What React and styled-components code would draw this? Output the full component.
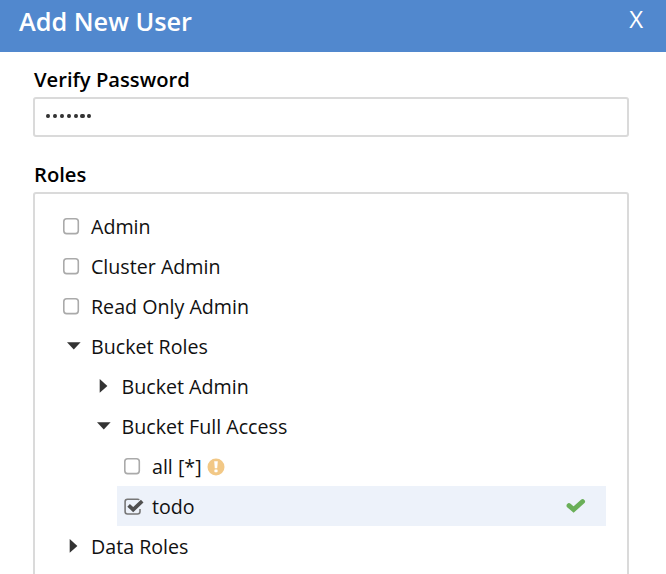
import React from "react";
import styled, { createGlobalStyle } from "styled-components";

const GlobalStyle = createGlobalStyle`
  * { box-sizing: border-box; }
  body {
    margin: 0;
    background: #fff;
    color: #111;
    font-family: "Open Sans", "Noto Sans", sans-serif;
    overflow: hidden;
  }
`;

const Dialog = styled.main`
  display: flex;
  flex-direction: column;
  height: 574px;
  overflow: hidden;
`;

const Header = styled.header`
  display: flex;
  flex: none;
  align-items: flex-start;
  justify-content: space-between;
  height: 52px;
  padding: 0 23px 0 19px;
  background: #5188ce;
  color: #fff;
`;

const Title = styled.h1`
  margin: 0;
  font-size: 25.3px;
  line-height: 42px;
  font-weight: 600;
`;

const CloseButton = styled.button`
  padding: 0;
  border: 0;
  background: none;
  color: #fff;
  font: 400 24px/38px "Open Sans", sans-serif;
`;

const Form = styled.form`
  display: flex;
  flex-direction: column;
  flex: none;
  padding: 13px 37px 0 33px;
`;

const Label = styled.label`
  height: 32px;
  padding-left: 1px;
  color: #000;
  font-size: 20.2px;
  line-height: 28px;
  font-weight: 600;
`;

const PasswordBox = styled.div`
  display: flex;
  align-items: center;
  gap: 2.7px;
  height: 40px;
  margin-bottom: 23px;
  padding: 0 0 2px 11px;
  border: 2px solid #dadada;
  border-radius: 3px;
`;

const Dot = styled.span`
  width: 4.2px;
  height: 4.8px;
  border-radius: 50%;
  background: #333;
`;

const RoleTree = styled.div`
  height: 420px;
  padding: 11.4px 21px 0 27px;
  border: 2px solid #dadada;
  border-radius: 3px;
`;

const Row = styled.div`
  display: flex;
  align-items: center;
  height: ${(p) => (p.$leaf ? 40.4 : 39.8)}px;
  margin-left: ${(p) => p.$level * 30.5 - 6}px;
  padding-left: 5.5px;
  background: ${(p) => (p.$selected ? "#edf2fa" : "transparent")};
`;

const IconSlot = styled.span`
  display: flex;
  width: 29.5px;
  flex: none;
`;

const RowText = styled.span`
  padding-top: 2px;
  font-size: 19.65px;
  line-height: 30px;
  white-space: pre;
`;

const Glyph = styled.svg`
  display: block;
  flex: none;
  overflow: visible;
`;

const WarningIcon = styled(Glyph)`
  margin: 2px 0 0 5px;
`;

const GreenCheck = styled(Glyph)`
  margin: 0 20px 0 auto;
`;

function RoleIcon({ type }) {
  if (type === "open" || type === "closed") {
    return (
      <Glyph width="22" height="18">
        <path
          fill="#333"
          d={type === "open" ? "M5 5.2H18.6L11.8 12.5Z" : "M7.7 2V15.8L15.4 8.9Z"}
        />
      </Glyph>
    );
  }
  return (
    <Glyph width="22" height="18">
      {type === "checked" ? (
        <>
          <path
            fill="none"
            stroke="#777"
            strokeWidth="1.6"
            d="M17 12V14.5Q17 17 14.5 17H4.5Q2.1 17 2.1 14.5V4.5Q2.1 2.2 4.5 2.2H14.5Q15.8 2.2 16.3 2.8"
          />
          <path fill="none" stroke="#505050" strokeWidth="3.7" d="M5.6 8.3L10.2 12.7L19.2 4.1" />
        </>
      ) : (
        <rect x="1.8" y="1.8" width="14.5" height="14.8" rx="2.8" fill="#fff" stroke="#aaa" strokeWidth="1.6" />
      )}
    </Glyph>
  );
}

const roles = [
  { name: "Admin", level: 0, type: "empty" },
  { name: "Cluster Admin", level: 0, type: "empty" },
  { name: "Read Only Admin", level: 0, type: "empty" },
  { name: "Bucket Roles", level: 0, type: "open" },
  { name: "Bucket Admin", level: 1, type: "closed" },
  { name: "Bucket Full Access", level: 1, type: "open" },
  { name: "all [*]", level: 2, type: "empty", warning: true },
  { name: "todo", level: 2, type: "checked", selected: true },
  { name: "Data Roles", level: 0, type: "closed" },
];

export default function App() {
  return (
    <>
      <GlobalStyle />
      <Dialog>
        <Header>
          <Title>Add New User</Title>
          <CloseButton aria-label="Close">X</CloseButton>
        </Header>
        <Form>
          <Label>Verify Password</Label>
          <PasswordBox>
            {Array.from({ length: 7 }, (_, i) => <Dot key={i} />)}
          </PasswordBox>
          <Label>Roles</Label>
          <RoleTree>
            {roles.map((role) => (
              <Row
                key={role.name}
                $level={role.level}
                $leaf={role.type === "empty"}
                $selected={role.selected}
              >
                <IconSlot><RoleIcon type={role.type} /></IconSlot>
                <RowText>{role.name}</RowText>
                {role.warning && (
                  <WarningIcon width="18" height="18">
                    <circle cx="9" cy="9" r="8.5" fill="#f2c886" />
                    <path fill="#fff" d="M7.2 3.2H10.8L10.2 10.2H7.8Z" />
                    <rect x="7.4" y="11.4" width="3.2" height="2.8" rx=".6" fill="#fff" />
                  </WarningIcon>
                )}
                {role.selected && (
                  <GreenCheck width="20" height="16">
                    <path
                      fill="none"
                      stroke="#6aaf58"
                      strokeWidth="4.8"
                      strokeLinecap="round"
                      d="M3 7.6L7.6 11.6L16.6 3.5"
                    />
                  </GreenCheck>
                )}
              </Row>
            ))}
          </RoleTree>
        </Form>
      </Dialog>
    </>
  );
}
